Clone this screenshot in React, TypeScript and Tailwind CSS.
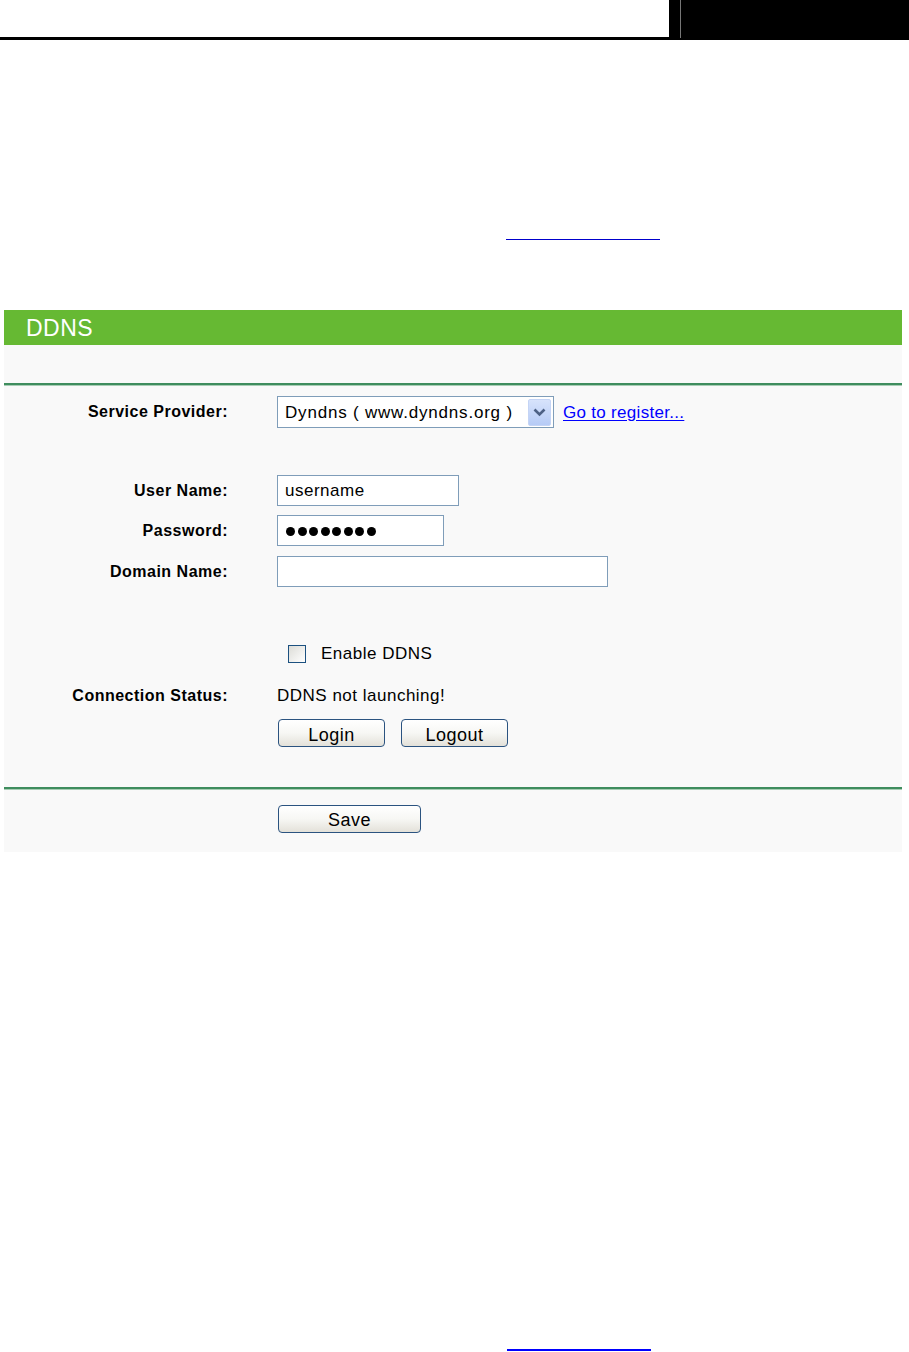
import React from "react";

const font = { fontFamily: '"Liberation Sans", Arial, sans-serif' };

function Label({ children }: { children: React.ReactNode }) {
  return (
    <div className="w-[224px] shrink-0 text-right text-[16px] font-bold tracking-[0.5px] text-black">
      {children}
    </div>
  );
}

function XpButton({ label, width }: { label: string; width: string }) {
  return (
    <button
      className={`${width} h-[28px] rounded-[4px] border border-[#2b5380] bg-gradient-to-b from-white via-[#f7f7f4] to-[#e3e1d9] pt-[3px] text-[18px] tracking-[0.5px] text-black leading-none`}
      style={font}
    >
      {label}
    </button>
  );
}

export default function App() {
  return (
    <div className="w-[909px] h-[1352px] bg-white overflow-hidden" style={font}>
      {/* top page header */}
      <div className="flex h-[40px]">
        <div className="w-[669px] border-b-[3px] border-black" />
        <div className="flex-1 bg-black pl-[11px]">
          <div className="w-px h-[38px] bg-[#777]" />
        </div>
      </div>

      <div className="ml-[506px] mt-[199px] w-[154px] h-px bg-[#0000cc]" />

      {/* DDNS panel */}
      <div className="mx-[4px] mt-[70px] w-[898px]">
        <div className="h-[35px] bg-[#66b933] pl-[22px] pt-[1px] flex items-center text-white text-[23px] tracking-[0.5px]">
          DDNS
        </div>
        <div className="bg-[#f9f9f9] pt-[38px] pb-[19px]">
          <div className="h-[3px] border-t-2 border-[#3f8d5e] bg-[#a8cdb5]" />

          <div className="mt-[10px] h-[32px] flex items-center">
            <Label>Service Provider:</Label>
            <div className="ml-[49px] w-[277px] h-[32px] border border-[#7f9db9] bg-white flex items-center">
              <span className="flex-1 pl-[7px] pt-[2px] text-[17px] tracking-[0.8px] text-black whitespace-nowrap">
                Dyndns ( www.dyndns.org )
              </span>
              <div className="w-[23px] h-[27px] mr-[2px] rounded-[2px] bg-gradient-to-b from-[#d7e3fb] to-[#b6cbf6] border border-[#c4d4f5] flex items-center justify-center">
                <svg width="13" height="9" viewBox="0 0 13 9">
                  <path d="M1.5 1.5 L6.5 6.5 L11.5 1.5" stroke="#4d6185" strokeWidth="2.6" fill="none" />
                </svg>
              </div>
            </div>
            <a className="ml-[9px] pt-[2px] text-[17px] tracking-[0.3px] text-[#0000ff] underline underline-offset-2">
              Go to register...
            </a>
          </div>

          <div className="mt-[47px] h-[31px] flex items-center">
            <Label>User Name:</Label>
            <div className="ml-[49px] w-[182px] h-[31px] border border-[#7f9db9] bg-white flex items-center pl-[7px] pt-[1px] text-[17px] tracking-[0.5px] text-black">
              username
            </div>
          </div>

          <div className="mt-[9px] h-[31px] flex items-center">
            <Label>Password:</Label>
            <div className="ml-[49px] w-[167px] h-[31px] border border-[#7f9db9] bg-white flex items-center gap-[2.5px] pl-[8px] pt-[1px]">
              {[0, 1, 2, 3, 4, 5, 6, 7].map((i) => (
                <span key={i} className="w-[9px] h-[9px] rounded-full bg-black" />
              ))}
            </div>
          </div>

          <div className="mt-[10px] h-[31px] flex items-center">
            <Label>Domain Name:</Label>
            <div className="ml-[49px] w-[331px] h-[31px] border border-[#7f9db9] bg-white" />
          </div>

          <div className="mt-[56px] h-[22px] flex items-center">
            <div className="w-[224px] shrink-0" />
            <div className="ml-[60px] w-[18px] h-[18px] border border-[#1c5180] bg-gradient-to-br from-[#dcdcd7] to-white" />
            <span className="ml-[15px] text-[17px] tracking-[0.5px] text-black">Enable DDNS</span>
          </div>

          <div className="mt-[21px] h-[20px] flex items-center">
            <Label>Connection Status:</Label>
            <span className="ml-[49px] text-[17px] tracking-[0.5px] text-black whitespace-nowrap">
              DDNS not launching!
            </span>
          </div>

          <div className="mt-[13px] h-[28px] flex items-center">
            <div className="w-[224px] shrink-0" />
            <div className="ml-[50px] flex gap-[16px]">
              <XpButton label="Login" width="w-[107px]" />
              <XpButton label="Logout" width="w-[107px]" />
            </div>
          </div>

          <div className="mt-[40px] h-[3px] border-t-2 border-[#3f8d5e] bg-[#a8cdb5]" />

          <div className="mt-[15px] h-[28px] flex items-center">
            <div className="w-[224px] shrink-0" />
            <div className="ml-[50px]">
              <XpButton label="Save" width="w-[143px]" />
            </div>
          </div>
        </div>
      </div>

      <div className="ml-[507px] mt-[497px] w-[144px] h-[2px] bg-[#0000ff]" />
    </div>
  );
}
